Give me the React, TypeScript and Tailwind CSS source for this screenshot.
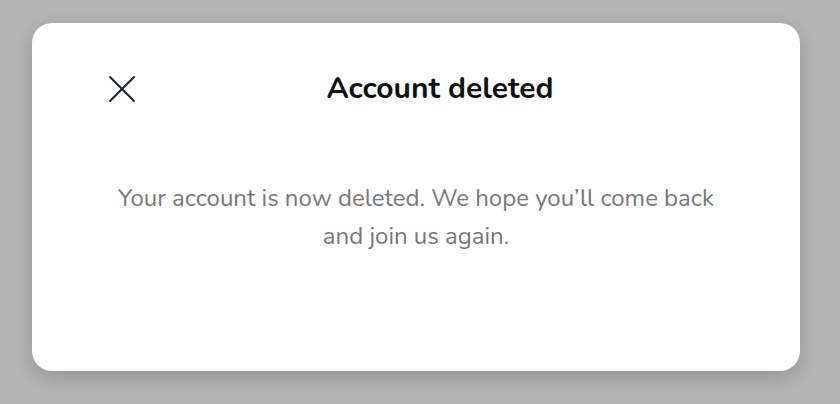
import React from "react";

export default function App() {
  return (
    <div className="w-[840px] h-[404px] bg-[#b4b4b4] pt-[23px] pl-[32px]" style={{ fontFamily: "Nunito, Lato, 'Noto Sans', sans-serif" }}>
      <div className="w-[768px] h-[348px] bg-white rounded-[20px] shadow-[0_6px_18px_rgba(0,0,0,0.18)] flex flex-col pt-[48px]">
        <div className="relative h-[36px] flex items-center justify-center pl-[48px]">
          <button className="absolute left-[74px] top-[2px] w-[32px] h-[32px] flex items-center justify-center">
            <svg width="28" height="28" viewBox="0 0 28 28" fill="none" stroke="#1c2130" strokeWidth="2" strokeLinecap="round">
              <path d="M2 2L26 26M26 2L2 26" />
            </svg>
          </button>
          <h1 className="text-[30px] leading-[36px] font-bold text-[#111]">Account deleted</h1>
        </div>
        <p className="mx-auto mt-[72px] w-[620px] text-center text-[24px] leading-[38px] text-[#777]">
          Your account is now deleted. We hope you’ll come back and join us again.
        </p>
      </div>
    </div>
  );
}
